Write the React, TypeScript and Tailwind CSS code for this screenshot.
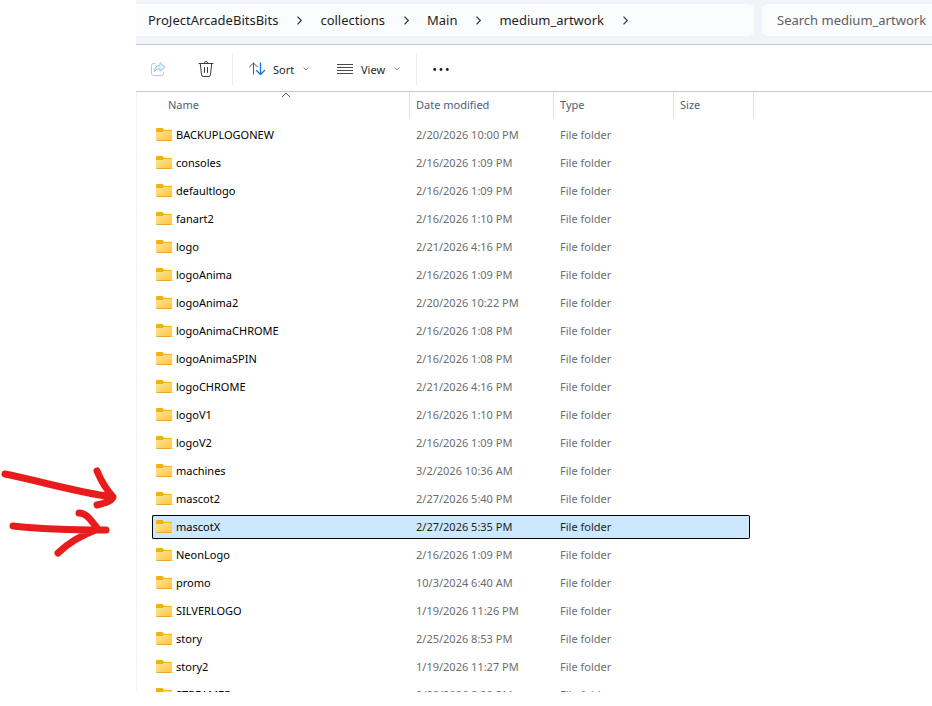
import React from 'react';

interface FileEntry {
  name: string;
  modified: string;
}

const entries: FileEntry[] = [
  { name: 'BACKUPLOGONEW', modified: '2/20/2026 10:00 PM' },
  { name: 'consoles', modified: '2/16/2026 1:09 PM' },
  { name: 'defaultlogo', modified: '2/16/2026 1:09 PM' },
  { name: 'fanart2', modified: '2/16/2026 1:10 PM' },
  { name: 'logo', modified: '2/21/2026 4:16 PM' },
  { name: 'logoAnima', modified: '2/16/2026 1:09 PM' },
  { name: 'logoAnima2', modified: '2/20/2026 10:22 PM' },
  { name: 'logoAnimaCHROME', modified: '2/16/2026 1:08 PM' },
  { name: 'logoAnimaSPIN', modified: '2/16/2026 1:08 PM' },
  { name: 'logoCHROME', modified: '2/21/2026 4:16 PM' },
  { name: 'logoV1', modified: '2/16/2026 1:10 PM' },
  { name: 'logoV2', modified: '2/16/2026 1:09 PM' },
  { name: 'machines', modified: '3/2/2026 10:36 AM' },
  { name: 'mascot2', modified: '2/27/2026 5:40 PM' },
  { name: 'mascotX', modified: '2/27/2026 5:35 PM' },
  { name: 'NeonLogo', modified: '2/16/2026 1:09 PM' },
  { name: 'promo', modified: '10/3/2024 6:40 AM' },
  { name: 'SILVERLOGO', modified: '1/19/2026 11:26 PM' },
  { name: 'story', modified: '2/25/2026 8:53 PM' },
  { name: 'story2', modified: '1/19/2026 11:27 PM' },
  { name: 'STREAMER', modified: '2/28/2026 8:28 PM' },
];

const crumbs = ['ProJectArcadeBitsBits', 'collections', 'Main', 'medium_artwork'];
const selected = 'mascotX';

const FolderIcon: React.FC = () => (
  <svg width="16" height="16" viewBox="0 0 16 16" className="shrink-0" aria-hidden="true">
    <defs>
      <linearGradient id="folder" x1="0" y1="0" x2="1" y2="1">
        <stop offset="0" stopColor="#ffe69a" />
        <stop offset="1" stopColor="#fdc638" />
      </linearGradient>
    </defs>
    <path d="M0 2.2Q0 1 1.2 1H6.5L8 2.7H15Q16 2.7 16 3.7V6H0Z" fill="#f5b00f" />
    <path d="M0 5H6.5L8.2 3.7H15.2Q16 3.7 16 4.5V13Q16 14 15 14H1Q0 14 0 13Z" fill="url(#folder)" />
    <path d="M.5 13.5H15.5" stroke="#eba827" />
  </svg>
);

const ShareIcon: React.FC = () => (
  <svg width="16" height="16" viewBox="0 0 16 16" fill="none" aria-hidden="true">
    <path d="M5.5 2.5H3.5Q1.5 2.5 1.5 4.5V12.5Q1.5 14.5 3.5 14.5H11.5Q13.5 14.5 13.5 12.5V11" stroke="#c4c4c4" />
    <path d="M10 1.7L15 6L10 10.3V7.8Q6.5 7.6 4.3 10.5Q4.8 4.6 10 4.2Z" stroke="#93c8f0" fill="#e4f2fc" strokeLinejoin="round" />
  </svg>
);

const TrashIcon: React.FC = () => (
  <svg width="16" height="16" viewBox="0 0 16 16" fill="none" stroke="#3b3b3b" strokeLinecap="round" aria-hidden="true">
    <path d="M1 2.5H15M6 2.5Q6 .5 8 .5T10 2.5M2.3 2.5L3.5 13.6Q3.7 15.5 5.2 15.5H10.8Q12.3 15.5 12.5 13.6L13.7 2.5M6.5 6.5V11.5M9.5 6.5V11.5" />
  </svg>
);

const SortIcon: React.FC = () => (
  <svg width="16" height="16" viewBox="0 0 16 16" fill="none" strokeLinecap="round" strokeLinejoin="round" aria-hidden="true">
    <path d="M4.5 13V2M.5 6L4.5 2L8.5 6" stroke="#555" />
    <path d="M11.5 2V13.5M7.5 9.5L11.5 13.5L15.5 9.5" stroke="#0f78d4" strokeWidth="1.3" />
  </svg>
);

const ViewIcon: React.FC = () => (
  <svg width="16" height="16" viewBox="0 0 16 16" stroke="#4a4a4a" aria-hidden="true">
    <path d="M0 3.5H16M0 6.5H16M0 9.5H16M0 12.5H16" />
  </svg>
);

const ChevronDown: React.FC = () => (
  <svg width="6" height="6" viewBox="0 0 6 6" fill="none" stroke="#8a8a8a" aria-hidden="true">
    <path d="M.5 1.5L3 4L5.5 1.5" />
  </svg>
);

const Breadcrumbs: React.FC = () => (
  <nav aria-label="Address" className="flex h-8 min-w-0 flex-1 items-center rounded-r-md bg-[#fbfcfd] pt-0.5 pl-3 text-[13px] text-[#1f1f1f]">
    {crumbs.map((crumb) => (
      <React.Fragment key={crumb}>
        <a href="#" className="whitespace-nowrap">{crumb}</a>
        <svg width="42" height="10" viewBox="0 0 42 10" fill="none" stroke="#333" strokeWidth="1.2" aria-hidden="true">
          <path d="M19.5 .7L23.3 4.5L19.5 8.3" />
        </svg>
      </React.Fragment>
    ))}
  </nav>
);

const Toolbar: React.FC = () => (
  <div className="flex h-[47px] shrink-0 items-center border-b border-[#c6c8d2] pt-0.5 pl-3.5 text-[11px] text-[#1f1f1f]">
    <button aria-label="Share" className="mr-8" disabled><ShareIcon /></button>
    <button aria-label="Delete"><TrashIcon /></button>
    <span className="mr-4 ml-[18px] h-8 w-px bg-[#ececec]" />
    <button className="flex w-[60px] items-center">
      <SortIcon />
      <span className="mr-auto ml-2 pt-0.5">Sort</span>
      <ChevronDown />
    </button>
    <button className="ml-7 flex w-[63px] items-center">
      <ViewIcon />
      <span className="mr-auto ml-2 pt-0.5">View</span>
      <ChevronDown />
    </button>
    <span className="mx-4 h-8 w-px bg-[#ececec]" />
    <button aria-label="See more">
      <svg width="16" height="16" viewBox="0 0 16 16" fill="#1a1a1a" aria-hidden="true">
        <circle cx="1.7" cy="8.5" r="1.4" />
        <circle cx="8" cy="8.5" r="1.4" />
        <circle cx="14.3" cy="8.5" r="1.4" />
      </svg>
    </button>
  </div>
);

const FileRow: React.FC<{ entry: FileEntry }> = ({ entry }) => {
  const active = entry.name === selected;
  const fill = active ? 'border-black bg-[#cce8ff] text-[#1f1f1f]' : 'border-transparent text-[#6d6d6d]';

  return (
    <tr className="h-7" aria-selected={active}>
      <td className="p-0">
        <div className={`flex h-6 items-center gap-1 rounded-l-xs border-y border-l pl-[3px] ${fill}`}>
          <FolderIcon />
          <span className="text-black">{entry.name}</span>
        </div>
      </td>
      <td className="p-0">
        <div className={`flex h-6 items-center border-y pl-1.5 ${fill}`}>{entry.modified}</div>
      </td>
      <td className="p-0">
        <div className={`flex h-6 items-center border-y pl-1.5 ${fill}`}>File folder</div>
      </td>
      <td className="py-0 pr-1 pl-0">
        <div className={`h-6 rounded-r-xs border-y border-r ${fill}`} />
      </td>
    </tr>
  );
};

const FileTable: React.FC = () => (
  <div className="min-h-0 flex-1 overflow-hidden border-l border-[#f5f5f5] pl-[15px]">
    <table className="w-[602px] table-fixed border-separate border-spacing-0 text-left text-[11px] whitespace-nowrap">
      <colgroup>
        <col className="w-[258px]" />
        <col className="w-[144px]" />
        <col className="w-[120px]" />
        <col className="w-[80px]" />
      </colgroup>
      <thead>
        <tr className="h-[26px] text-[#4c607a]">
          <th className="relative border-r border-[#e2e2e2] py-0 pr-0 pl-4 font-normal">
            Name
            <svg width="10" height="6" viewBox="0 0 10 6" fill="none" stroke="#555" className="absolute top-0 left-1/2" aria-hidden="true">
              <path d="M1 5L5 1L9 5" />
            </svg>
          </th>
          <th className="border-r border-[#e2e2e2] py-0 pr-0 pl-1.5 font-normal">Date modified</th>
          <th className="border-r border-[#e2e2e2] py-0 pr-0 pl-1.5 font-normal">Type</th>
          <th className="border-r border-[#e2e2e2] py-0 pr-0 pl-1.5 font-normal">Size</th>
        </tr>
      </thead>
      <tbody>
        <tr className="h-[3px]"><td colSpan={4} className="p-0" /></tr>
        {entries.map((entry) => (
          <FileRow key={entry.name} entry={entry} />
        ))}
      </tbody>
    </table>
  </div>
);

const Arrows: React.FC = () => (
  <svg
    width="136"
    height="110"
    viewBox="0 0 136 110"
    fill="none"
    stroke="#e81c1c"
    strokeWidth="7"
    strokeLinecap="round"
    strokeLinejoin="round"
    className="pointer-events-none absolute top-[455px] left-0"
    aria-hidden="true"
  >
    <path d="M5 19C40 26 75 37 113 42M97 16C102 28 106 34 113 42C112 46 105 48 97 50" />
    <path d="M13 71C40 74 75 75 106 75M79 58C87 58 91 66 98 74C82 80 68 88 58 98" />
  </svg>
);

const App: React.FC = () => {
  return (
    <div className="relative h-screen overflow-hidden bg-white pb-3.5 pl-[136px] font-['Noto_Sans',sans-serif]">
      <main className="flex h-full flex-col">
        <header className="flex h-[45px] shrink-0 gap-2 border-b border-[#c3c7d5] bg-[#f2f3f8] pt-1">
          <Breadcrumbs />
          <input
            type="text"
            aria-label="Search medium_artwork"
            placeholder="Search medium_artwork"
            className="h-8 w-[170px] rounded-l-md bg-[#fbfcfd] pl-[15px] text-[13px] outline-none placeholder:text-[#606060]"
          />
        </header>
        <Toolbar />
        <FileTable />
      </main>
      <Arrows />
    </div>
  );
};

export default App;
